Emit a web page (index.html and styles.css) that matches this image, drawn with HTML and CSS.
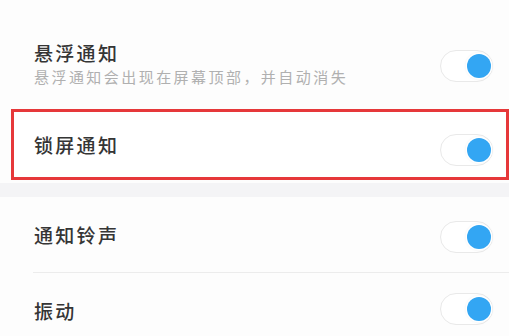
FILE: index.html
```html
<!DOCTYPE html>
<html lang="zh-CN">
<head>
<meta charset="utf-8">
<title>通知设置</title>
<link rel="stylesheet" href="styles.css">
</head>
<body>
<div class="page">
  <div class="spacer"></div>
  <div class="row row-tall">
    <div class="text">
      <div class="title">悬浮通知</div>
      <div class="sub">悬浮通知会出现在屏幕顶部，并自动消失</div>
    </div>
    <div class="toggle"><span class="knob"></span></div>
  </div>
  <div class="row row-highlight">
    <div class="text">
      <div class="title">锁屏通知</div>
    </div>
    <div class="toggle toggle-low"><span class="knob"></span></div>
  </div>
  <div class="band"></div>
  <div class="row row-plain">
    <div class="text">
      <div class="title">通知铃声</div>
    </div>
    <div class="toggle"><span class="knob"></span></div>
  </div>
  <div class="divider"></div>
  <div class="row row-last">
    <div class="text">
      <div class="title title-low">振动</div>
    </div>
    <div class="toggle toggle-up"><span class="knob"></span></div>
  </div>
</div>
</body>
</html>
```
FILE: styles.css
```css
html, body {
  margin: 0;
  padding: 0;
  background: #fdfdfd;
}
body {
  font-family: "Noto Sans CJK SC", "Noto Sans", sans-serif;
  width: 509px;
  height: 336px;
  overflow: hidden;
}
.page {
  display: flex;
  flex-direction: column;
}
.spacer {
  height: 19px;
}
.row {
  display: flex;
  align-items: center;
  justify-content: space-between;
  padding-left: 34px;
  padding-right: 16px;
  box-sizing: border-box;
}
.row-tall {
  height: 89px;
  margin-bottom: 1px;
}
.row-highlight {
  height: 71px;
  margin-left: 11px;
  padding-left: 20px;
  padding-right: 13px;
  border: 3px solid #e6383a;
  background: #ffffff;
}
.band {
  height: 14px;
  margin-top: 3px;
  background: #f4f4f6;
}
.row-plain {
  height: 75px;
}
.divider {
  height: 1px;
  margin-left: 33px;
  background: #ececec;
}
.row-last {
  height: 74px;
}
.text {
  display: flex;
  flex-direction: column;
}
.title {
  font-size: 19px;
  font-weight: 500;
  line-height: 26px;
  letter-spacing: 2.3px;
  color: #353535;
}
.title-low {
  margin-top: 2px;
}
.sub {
  font-size: 15px;
  line-height: 22px;
  letter-spacing: 2.45px;
  color: #b0b0b0;
}
.toggle {
  width: 53px;
  height: 32px;
  box-sizing: border-box;
  border: 1.5px solid #e9e9e9;
  border-radius: 16px;
  background: #ffffff;
  display: flex;
  align-items: center;
  justify-content: flex-end;
  padding-right: 1px;
  margin-top: 5px;
}
.toggle-low {
  margin-top: 11px;
}
.toggle-up {
  margin-top: -3px;
}
.knob {
  width: 24px;
  height: 24px;
  border-radius: 50%;
  background: #33a6f3;
  box-shadow: 0 0 0 1.5px #ffffff, 0 0 2px 2px rgba(0, 0, 0, 0.04);
}
```
